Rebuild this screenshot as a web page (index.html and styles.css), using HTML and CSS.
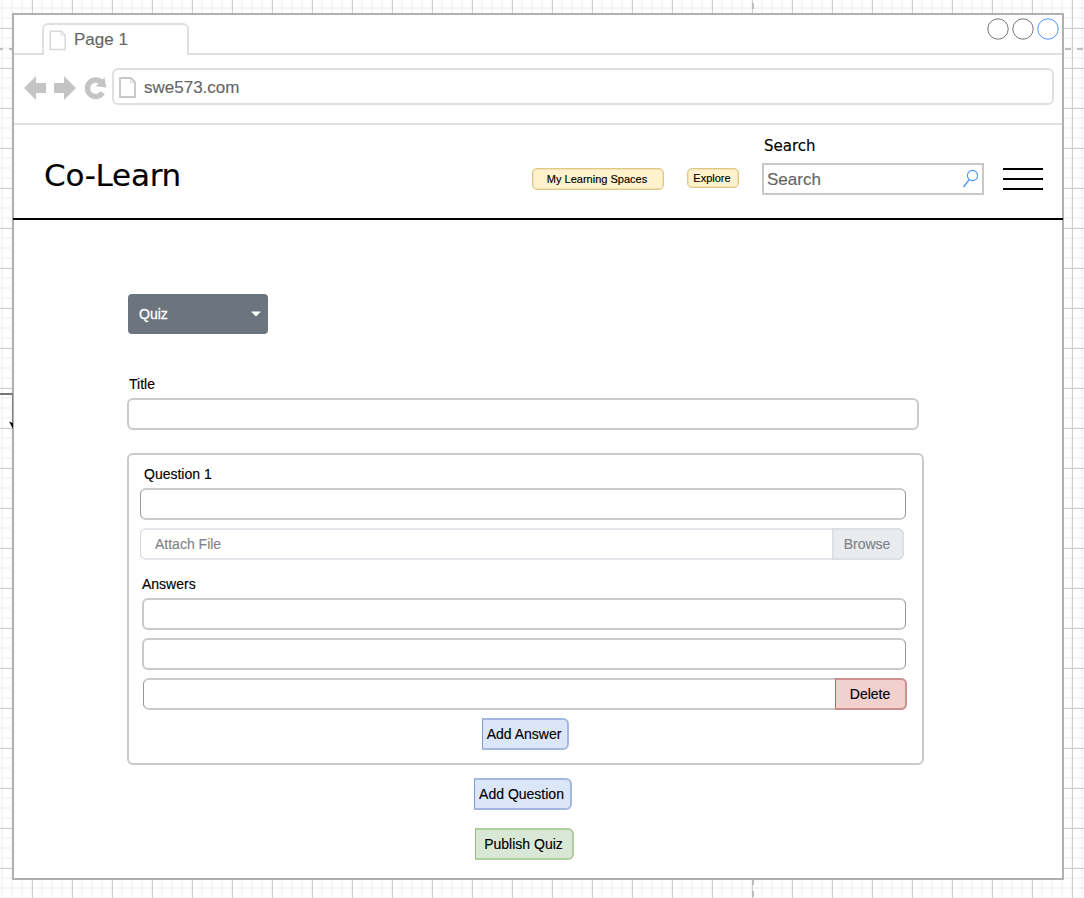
FILE: index.html
```html
<!DOCTYPE html>
<html lang="en">
<head>
<meta charset="utf-8">
<title>Co-Learn</title>
<link rel="stylesheet" href="styles.css">
</head>
<body>
<div class="window">
  <div class="tabs">
    <div class="tab">
      <svg class="page-icon" width="18" height="21" viewBox="0 0 18 21"><path d="M1.2 1.2H12.3L16.2 5V19.4H1.2Z" fill="none" stroke="#dadada" stroke-width="1.5"/><path d="M12 1.5V5.2H16" fill="none" stroke="#dedede"/></svg>
      <span class="tab-text">Page 1</span>
    </div>
    <div class="circles">
      <svg width="72" height="22" viewBox="0 0 72 22" fill="none"><circle cx="11" cy="11" r="10.2" stroke="#777"/><circle cx="36" cy="11" r="10.2" stroke="#777"/><circle cx="61" cy="11" r="10.2" stroke="#4f98fb"/></svg>
    </div>
  </div>
  <div class="toolbar">
    <svg class="nav-icons" width="84" height="26" viewBox="0 0 84 26">
      <path d="M0 13L12 1V8H22V18H12V25ZM30 8H40V1L52 13L40 25V18H30Z" fill="#c4c4c4"/>
      <path d="M78.6 17.6A8.2 8.2 0 1 1 77.6 7.6" fill="none" stroke="#c4c4c4" stroke-width="5.4"/>
      <path d="M80.5 2.3L82.2 12.6L71.8 11.2Z" fill="#c4c4c4"/>
    </svg>
    <div class="address">
      <svg width="18" height="21" viewBox="0 0 18 21"><path d="M1 1H12L16 5V20H1Z" fill="none" stroke="#c6c6c6" stroke-width="1.8"/><path d="M11.8 1V5.4H16" fill="none" stroke="#d2d2d2"/></svg>
      <span class="address-text">swe573.com</span>
    </div>
  </div>
  <header class="header">
    <h1 class="brand"><span>Co-Learn</span></h1>
    <span class="pill spaces">My Learning Spaces</span>
    <span class="pill explore">Explore</span>
    <div class="search">
      <span class="search-label">Search</span>
      <div class="search-box"><span>Search</span>
        <svg width="17" height="20" viewBox="0 0 17 20" fill="none" stroke="#4f98fb"><circle cx="10.5" cy="6.5" r="5.1" stroke-width="1.1"/><path d="M7.3 10.6L1.5 18" stroke-width="1.4"/></svg>
      </div>
    </div>
    <div class="menu"><i></i><i></i><i></i></div>
  </header>
  <main class="content">
    <div class="select"><span>Quiz</span><svg width="10" height="6" viewBox="0 0 10 6"><path d="M0 .5H10L5 5.5Z" fill="#fff"/></svg></div>
    <div class="label title-label">Title</div>
    <div class="field title-field"></div>
    <section class="question">
      <div class="label question-label">Question 1</div>
      <div class="field thin"></div>
      <div class="attach"><span class="attach-name">Attach File</span><span class="browse">Browse</span></div>
      <div class="label answers-label">Answers</div>
      <div class="field answer"></div>
      <div class="field answer"></div>
      <div class="answer-row"><span class="btn delete">Delete</span></div>
      <span class="btn blue add-answer">Add Answer</span>
    </section>
    <span class="btn blue add-question">Add Question</span>
    <span class="btn publish">Publish Quiz</span>
  </main>
</div>
<svg class="guides" width="1084" height="898" viewBox="0 0 1084 898" aria-hidden="true">
  <path d="M0 49H3M9 49H12M1065 49H1071M1077 49H1083M753 3V9M753 880V885M753 891V897" stroke="#bdbdbd" stroke-width="2"/>
  <path d="M0 394H12" stroke="#777" stroke-width="2"/>
  <path d="M12.5 393V426" stroke="#80827c"/>
  <path d="M9 421.5L13 423V429Z" fill="#111"/>
</svg>
</body>
</html>
```
FILE: styles.css
```css
* { box-sizing: border-box; }
body {
  margin: 0;
  width: 1084px;
  height: 898px;
  overflow: hidden;
  padding: 13px 0 0 12px;
  position: relative;
  font-family: "Liberation Sans", Arial, sans-serif;
  font-size: 14px;
  color: #000;
  -webkit-text-stroke: .15px currentColor;
  background-color: #fff;
  background-image:
    linear-gradient(90deg, #cecece 1px, transparent 1px),
    linear-gradient(#cecece 1px, transparent 1px),
    linear-gradient(90deg, #f5f5f5 2px, transparent 2px),
    linear-gradient(#f5f5f5 2px, transparent 2px);
  background-size: 40px 40px, 40px 40px, 10px 10px, 10px 10px;
  background-position: 32px 0, 0 28px, 1px 0, 0 7px;
}
svg { display: block; flex: none; }
span { white-space: nowrap; }
.guides { position: absolute; left: 0; top: 0; }
.window {
  position: relative;
  width: 1052px;
  height: 867px;
  background: #fff;
  border: 2px solid #b0b0b0;
}
.tabs {
  height: 40px;
  display: flex;
  justify-content: space-between;
  box-shadow: inset 0 -2px #e0e0e0;
}
.tab {
  width: 147px;
  height: 32px;
  margin: 8px 0 0 28px;
  display: flex;
  padding: 5px 0 0 5px;
  gap: 7px;
  background: #fff;
  border: 2px solid #e0e0e0;
  border-bottom: 0;
  border-radius: 6px 6px 0 0;
}
.tab-text, .address-text { font-size: 17px; line-height: 20px; color: #666; }
.address-text { padding-top: 1px; }
.circles { margin: 3px 3px 0 0; }
.toolbar {
  height: 70px;
  display: flex;
  padding: 13px 8px 0 10px;
  border-bottom: 2px solid #e0e0e0;
}
.nav-icons { margin-top: 7px; }
.address {
  flex: 1;
  height: 37px;
  margin-left: 4px;
  display: flex;
  gap: 7px;
  padding: 7px 0 0 5px;
  border: 2px solid #e0e0e0;
  border-radius: 6px;
}
.header {
  display: flex;
  height: 95px;
  margin: 0 -1px;
  padding-left: 31px;
  border-bottom: 2px solid #000;
}
.brand {
  width: 488px;
  margin: 32px 0 0;
  font: 400 31px/36px "DejaVu Sans", sans-serif;
  letter-spacing: -.25px;
}
.pill {
  display: flex;
  align-items: center;
  justify-content: center;
  padding-right: 2px;
  font-size: 11px;
  background: #fff2cc;
  border: 1px solid #dfc884;
  box-shadow: inset 0 0 0 .5px #e6d39b;
  border-radius: 5px;
}
.spaces { width: 132px; height: 22px; margin-top: 43px; }
.explore { width: 52px; height: 20px; margin: 43px 0 0 23px; }
.search { width: 222px; margin-left: 23px; padding-top: 11px; }
.search-label { display: block; margin-left: 2px; font: 15px/20px "DejaVu Sans", sans-serif; }
.search-box {
  height: 32px;
  margin-top: 7px;
  padding: 0 3px 0 3px;
  display: flex;
  justify-content: space-between;
  align-items: center;
  border: 2px solid #c8c8c8;
  font-size: 17px;
  color: #666;
}
.search-box span { padding-top: 2px; }
.menu {
  width: 40px;
  margin: 43px 0 0 19px;
  display: flex;
  flex-direction: column;
  gap: 8px;
}
.menu i { height: 2px; background: #000; }
.content { padding: 74px 0 0 113px; }
.select {
  width: 140px;
  height: 40px;
  margin-left: 1px;
  padding: 0 7px 0 11px;
  display: flex;
  align-items: center;
  justify-content: space-between;
  color: #fff;
  background: #6c757d;
  border-radius: 4px;
  -webkit-text-stroke: .3px #fff;
}
.label { line-height: 20px; }
.title-label { margin: 40px 0 0 2px; }
.field {
  height: 32px;
  border: 2px solid #cacaca;
  border-radius: 6px;
}
.title-field { width: 792px; margin-top: 4px; }
.question {
  width: 797px;
  height: 312px;
  margin-top: 23px;
  padding: 9px 0 0 11px;
  border: 2px solid #cacaca;
  border-radius: 6px;
}
.question-label { margin-left: 4px; }
.thin { width: 766px; margin-top: 4px; border-width: 2px 1px; border-color: #cacaca #999; }
.attach {
  width: 764px;
  height: 32px;
  margin-top: 8px;
  display: flex;
  justify-content: space-between;
  align-items: center;
  border: 2px solid #e5e7ed;
  border-left: 1px solid #d3d6df;
  border-radius: 6px;
  color: #7e8488;
}
.attach-name { margin-left: 14px; }
.browse {
  width: 72px;
  height: 32px;
  margin-right: -2px;
  display: flex;
  align-items: center;
  justify-content: center;
  padding-right: 2px;
  background: #e9ebef;
  border: 2px solid #dcdfe6;
  border-radius: 0 6px 6px 0;
}
.answers-label { margin: 14px 0 4px 2px; }
.answer { width: 764px; margin: 0 0 8px 2px; border-right: 1px solid #999; }
.answer-row {
  width: 764px;
  height: 32px;
  margin-left: 3px;
  border: 2px solid #cacaca;
  border-left: 1px solid #999;
  border-radius: 6px;
  display: flex;
  justify-content: flex-end;
}
.btn {
  display: flex;
  align-items: center;
  justify-content: center;
  height: 32px;
  border: 1px solid;
  border-radius: 0 6px 6px 0;
}
.delete { width: 72px; margin: -2px -2px 0 0; padding-right: 1px; background: #f2d0ce; border: 2px solid #cf8f8c; border-left: 1px solid #b96a67; }
.blue { background: #dce6f9; border: 2px solid #a3b8de; border-left: 1px solid #7f9cce; }
.add-answer { width: 87px; margin: 8px 0 0 342px; padding-right: 2px; }
.add-question { width: 98px; margin: 13px 0 0 347px; padding-right: 2px; }
.publish { width: 99px; margin: 18px 0 0 348px; padding-right: 1px; background: #d9e7d6; border: 2px solid #b0cda0; border-left: 1px solid #91bb7c; }
```
